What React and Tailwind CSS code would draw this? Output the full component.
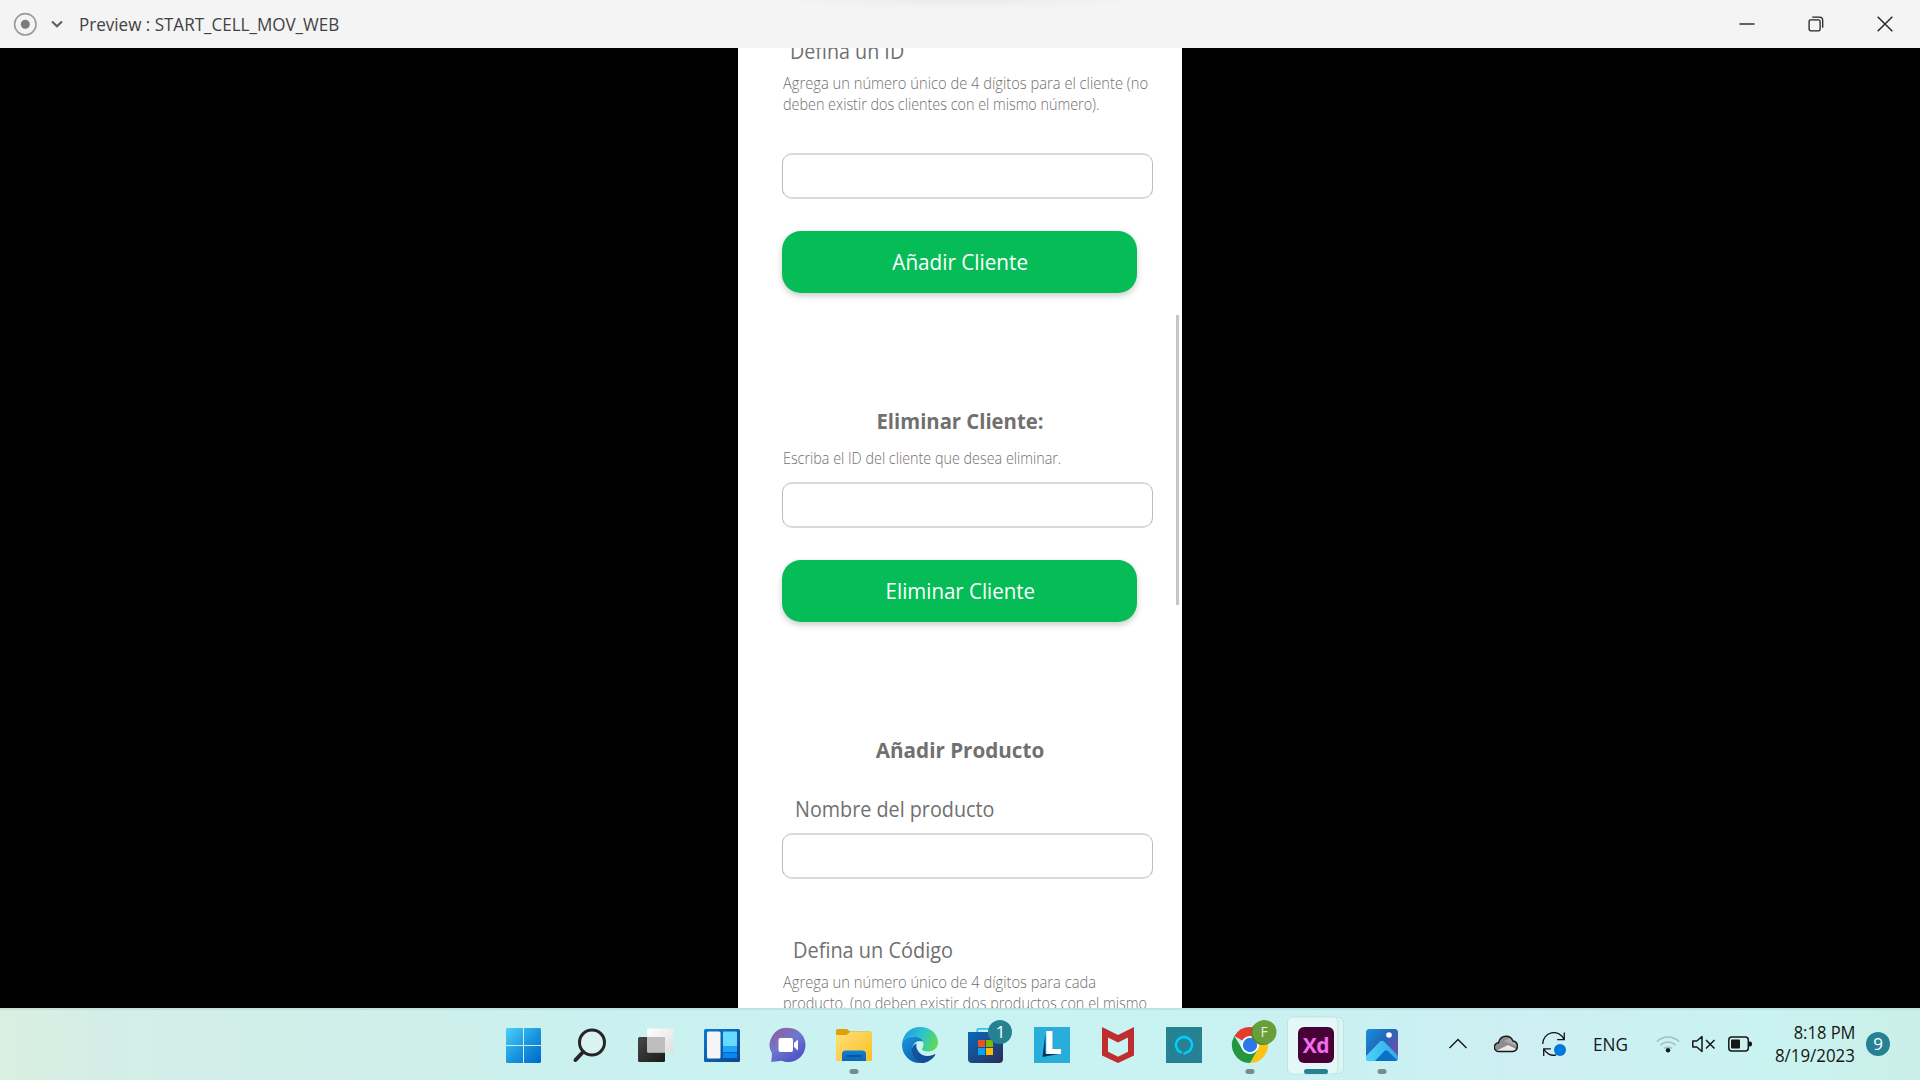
const FONT = "font-['Open_Sans','Noto_Sans',sans-serif]";

function TitleBar() {
  return (
    <header className="flex h-12 shrink-0 items-center bg-[#f4f4f4] bg-[radial-gradient(ellipse_190px_9px_at_960px_0px,#ebebeb,#f4f4f4)] text-[#424242]">
      <svg className="ml-[13px] shrink-0" width="24" height="24" viewBox="0 0 24 24">
        <circle cx="12.3" cy="12.3" r="10.7" fill="none" stroke="#9b9b9b" strokeWidth="1.6" />
        <circle cx="12.3" cy="12.3" r="4.5" fill="#7c7c7c" />
      </svg>
      <svg className="ml-[13px] shrink-0" width="14" height="10" viewBox="0 0 14 10">
        <path d="M2 2.5 7 7.3l5-4.8" fill="none" stroke="#5c5c5c" strokeWidth="2" />
      </svg>
      <h1 className="ml-[15px] origin-left scale-x-[0.946] whitespace-nowrap text-[18px] leading-6">Preview : START_CELL_MOV_WEB</h1>
      <div className="ml-auto mr-[1px] flex h-full pb-px">
        <div className="flex w-[69px] items-center justify-center">
          <svg width="16" height="16" viewBox="0 0 16 16"><path d="M.5 8h15" stroke="#222" strokeWidth="1.4" /></svg>
        </div>
        <div className="flex w-[69px] items-center justify-center">
          <svg width="16" height="16" viewBox="0 0 16 16" fill="none" stroke="#222" strokeWidth="1.3">
            <rect x="1.1" y="3.8" width="11" height="11" rx="1.6" />
            <path d="M4.2 1.2h7.2a3.3 3.3 0 0 1 3.3 3.3v7.3" />
          </svg>
        </div>
        <div className="flex w-[69px] items-center justify-center">
          <svg width="16" height="16" viewBox="0 0 16 16"><path d="m.7.700 14.600 14.600M15.300.700.7 15.300" stroke="#222" strokeWidth="1.400" /></svg>
        </div>
      </div>
    </header>
  );
}

function Field({ className }) {
  return <div className={`ml-11 h-[46px] w-[371px] shrink-0 rounded-[10px] border-x border-y-2 border-x-[#bdbdbd] border-y-[#d8d9d8] bg-white ${className}`} />;
}

function GreenButton({ children, className }) {
  return (
    <button className={`ml-11 flex h-[62px] w-[355px] shrink-0 items-center justify-center rounded-[19px] bg-[#06bc57] pb-0.5 pl-px text-[22px] leading-[30px] text-white shadow-[0_3px_6px_rgba(0,0,0,0.2)] ${className}`}>
      {children}
    </button>
  );
}

function Phone() {
  return (
    <main className="relative flex w-[444px] flex-col overflow-hidden bg-white text-[#707070]">
      <p className="-mt-[12px] ml-[52px] h-[30px] w-max shrink-0 origin-left scale-x-[0.938] whitespace-nowrap text-[21px] leading-[30px]">Defina un ID</p>
      <div className="ml-[45px] mt-[7px] shrink-0 whitespace-nowrap text-[16px] font-light leading-[21px]">
        <p className="w-max origin-left scale-x-[0.919]">Agrega un número único de 4 dígitos para el cliente (no</p>
        <p className="w-max origin-left scale-x-[0.898]">deben existir dos clientes con el mismo número).</p>
      </div>
      <Field className="mt-[38px]" />
      <GreenButton className="mt-8"><span className="scale-x-[0.94]">Añadir Cliente</span></GreenButton>
      <h2 className="mt-[113px] h-[30px] shrink-0 scale-x-[0.965] text-center text-[21px] font-bold leading-[30px]">Eliminar Cliente:</h2>
      <p className="ml-[45px] mt-[12px] h-[21px] w-max shrink-0 origin-left scale-x-[0.897] whitespace-nowrap text-[16px] font-light leading-[21px]">Escriba el ID del cliente que desea eliminar.</p>
      <Field className="mt-[13px]" />
      <GreenButton className="mt-8"><span className="scale-x-[0.93]">Eliminar Cliente</span></GreenButton>
      <h2 className="mt-[113px] h-[30px] shrink-0 scale-x-[0.982] text-center text-[21px] font-bold leading-[30px]">Añadir Producto</h2>
      <p className="ml-[57px] mt-[29px] h-[30px] w-max shrink-0 origin-left scale-x-[0.941] whitespace-nowrap text-[21px] leading-[30px]">Nombre del producto</p>
      <Field className="mt-[9px]" />
      <p className="ml-[55px] mt-[56px] h-[30px] w-max shrink-0 origin-left scale-x-[0.949] whitespace-nowrap text-[21px] leading-[30px]">Defina un Código</p>
      <div className="ml-[45px] mt-[7px] shrink-0 whitespace-nowrap text-[16px] font-light leading-[21px]">
        <p className="w-max origin-left scale-x-[0.92]">Agrega un número único de 4 dígitos para cada</p>
        <p className="w-max origin-left scale-x-[0.902]">producto. (no deben existir dos productos con el mismo</p>
      </div>
      <div className="absolute right-[3px] top-[267px] h-[290px] w-[3px] bg-[#c6c6c6]" />
    </main>
  );
}

function Slot({ children }) {
  return <svg className="shrink-0" width="66" height="72" viewBox="0 0 66 72">{children}</svg>;
}

const RunningDot = () => <rect x="28.500" y="61" width="9" height="5" rx="2.500" fill="#7b8b8b" />;

function StartIcon() {
  return (
    <Slot>
      <defs>
        <linearGradient id="win" gradientUnits="userSpaceOnUse" x1="15" y1="20" x2="50" y2="55">
          <stop offset="0" stopColor="#4cd0fd" /><stop offset=".55" stopColor="#1793dc" /><stop offset="1" stopColor="#0067cc" />
        </linearGradient>
      </defs>
      <g fill="url(#win)">
        <path d="M16.500 20H32v17H15V21.500a1.500 1.500 0 0 1 1.500-1.500Z" />
        <path d="M33 20h15.500a1.500 1.500 0 0 1 1.500 1.500V37H33Z" />
        <path d="M15 38h17v17H16.500a1.500 1.500 0 0 1-1.500-1.500Z" />
        <path d="M33 38h17v15.500a1.500 1.500 0 0 1-1.500 1.500H33Z" />
      </g>
    </Slot>
  );
}

function SearchIcon() {
  return (
    <Slot>
      <circle cx="35" cy="34.500" r="12.500" fill="#e2f3f3" fillOpacity=".6" stroke="#262626" strokeWidth="3" />
      <path d="m26 44-7.500 8" stroke="#262626" strokeWidth="4" strokeLinecap="round" />
    </Slot>
  );
}

function TaskViewIcon() {
  return (
    <Slot>
      <defs>
        <linearGradient id="tvd" x1="0" y1="0" x2="1" y2="1"><stop stopColor="#474747" /><stop offset="1" stopColor="#1b1b1b" /></linearGradient>
        <linearGradient id="tvl" x1="0" y1="0" x2="1" y2="1"><stop stopColor="#fff" /><stop offset="1" stopColor="#dedede" /></linearGradient>
      </defs>
      <rect x="15" y="29" width="27" height="25" rx="1.500" fill="url(#tvd)" />
      <rect x="24" y="20.500" width="26.500" height="24" rx="1.500" fill="url(#tvl)" />
      <path d="M24 29h18v15.500H25.500a1.500 1.500 0 0 1-1.500-1.500Z" fill="#bdbdbd" />
    </Slot>
  );
}

function WidgetsIcon() {
  return (
    <Slot>
      <defs><linearGradient id="wid" x1="0" y1="0" x2="1" y2="1"><stop stopColor="#0a7ad3" /><stop offset="1" stopColor="#11468a" /></linearGradient></defs>
      <rect x="15" y="21" width="36" height="33" rx="1.500" fill="url(#wid)" />
      <rect x="18" y="23.500" width="13.500" height="27" rx="1.500" fill="#f5f5f7" />
      <rect x="34" y="23.500" width="14" height="15" rx="1" fill="#66dbff" />
      <path d="M34 38.500h14V44H34Z" fill="#1aa7fb" />
      <path d="M34 44.800h14V50H34Z" fill="#0787f2" />
    </Slot>
  );
}

function ChatIcon() {
  return (
    <Slot>
      <defs><linearGradient id="chat" x1=".15" y1=".1" x2=".7" y2=".9"><stop stopColor="#8e5fa0" /><stop offset=".45" stopColor="#7078cf" /><stop offset="1" stopColor="#5157c6" /></linearGradient></defs>
      <path d="M33.500 20a17 17 0 1 1 0 34c-2.500 0-5-.4-7-1.300L16.300 54l.7-8.500A17 17 0 0 1 33.500 20Z" fill="url(#chat)" />
      <rect x="23.500" y="30" width="14.500" height="14" rx="2" fill="#fff" />
      <path d="m39 35 4-3.400v11L39 39Z" fill="#fff" />
    </Slot>
  );
}

function FolderIcon() {
  return (
    <Slot>
      <defs>
        <linearGradient id="fold" x1="0" y1="0" x2="1" y2="1"><stop stopColor="#ffe07a" /><stop offset="1" stopColor="#fbbd20" /></linearGradient>
        <linearGradient id="foldb" x1="0" y1="0" x2="0" y2="1"><stop stopColor="#1081d6" /><stop offset="1" stopColor="#0b64b5" /></linearGradient>
      </defs>
      <path d="M15 22.500a1.500 1.500 0 0 1 1.500-1.500H26l3 2.500h20a2 2 0 0 1 2 2V30H15Z" fill="#dfa109" />
      <path d="M15 27h10.500l3.500-3h20.500a1.500 1.500 0 0 1 1.500 1.500v26a1.500 1.500 0 0 1-1.500 1.500h-33a1.500 1.500 0 0 1-1.500-1.500Z" fill="url(#fold)" />
      <path d="M21 53v-7a3.500 3.500 0 0 1 3.500-3.500h17A3.500 3.500 0 0 1 45 46v7Z" fill="url(#foldb)" />
      <path d="M26 48h14" stroke="#0b4b8c" strokeWidth="1.500" strokeLinecap="round" />
      <RunningDot />
    </Slot>
  );
}

function EdgeIcon() {
  return (
    <Slot>
      <defs>
        <linearGradient id="eg1" x1="0" y1=".3" x2="1" y2=".6"><stop stopColor="#1b9ede" /><stop offset=".5" stopColor="#2bc3cf" /><stop offset="1" stopColor="#5fdc52" /></linearGradient>
        <linearGradient id="eg2" x1="0" y1="0" x2=".6" y2="1"><stop stopColor="#1a98e0" /><stop offset="1" stopColor="#1160b4" /></linearGradient>
        <linearGradient id="eg3" x1="0" y1="0" x2="1" y2="1"><stop stopColor="#0c59a4" /><stop offset="1" stopColor="#174a90" /></linearGradient>
      </defs>
      <path d="M15 36C16 26 23 19 33 19c11 0 18 7.500 18 15.500 0 5.500-4.500 9-9.500 9-4.500 0-6.500-1.500-6.500-2.500 0-.8 1.500-1.800 1.500-4.500 0-4-4-8-10-8C20.500 28.500 16 32 15 36Z" fill="url(#eg1)" />
      <path d="M15 37c0-5 5-8.500 11.500-8.500 5 0 8.500 2.500 9.500 5-5-2-11 1.500-11 8.500 0 6 4 11.500 9.500 13C24 56 15 47.500 15 37Z" fill="url(#eg2)" />
      <path d="M29.500 35.500c-1.500 6 4 12.500 11 12.500 3.500 0 6-1.200 7-1.800.6-.3 1 .2.700.7C45.500 51.500 40 55 34.500 55 28.500 54 24.500 48 24.800 42c.2-3.500 2-5.500 4.700-6.500Z" fill="url(#eg3)" />
    </Slot>
  );
}

function StoreIcon() {
  return (
    <Slot>
      <defs><linearGradient id="store" x1="0" y1="0" x2="1" y2="1"><stop stopColor="#0a69bd" /><stop offset="1" stopColor="#2a2e56" /></linearGradient></defs>
      <path d="M24.300 26v-4.200a1 1 0 0 1 1-1h15" fill="none" stroke="#35c0f0" strokeWidth="1.800" />
      <path d="M15 24h35v27a4 4 0 0 1-4 4H19a4 4 0 0 1-4-4Z" fill="url(#store)" />
      <path d="M25 32h7v7h-7Z" fill="#f25022" /><path d="M33 32h7v7h-7Z" fill="#7fba00" />
      <path d="M25 40h7v7h-7Z" fill="#00a4ef" /><path d="M33 40h7v7h-7Z" fill="#ffb900" />
      <circle cx="47" cy="24" r="12" fill="#268292" />
      <text x="47.500" y="29.800" textAnchor="middle" fontSize="17" fill="#fff">1</text>
    </Slot>
  );
}

function LIcon() {
  return (
    <Slot>
      <rect x="15" y="19" width="36" height="36" fill="#29aedb" />
      <path d="M26.500 25v20.500h15.500l-18.500 3.500Z" fill="#06305e" />
      <text x="24.800" y="46" fontSize="31" fontWeight="800" fill="#fff">L</text>
    </Slot>
  );
}

function ShieldIcon() {
  return (
    <Slot>
      <path fillRule="evenodd" d="m17 19 16 8 16-8v28.500L33 55l-16-7.500Zm6 10.500v14.200l10 5 10-5V29.500l-10 5Z" fill="#c02d2f" />
    </Slot>
  );
}

function RingIcon() {
  return (
    <Slot>
      <rect x="15" y="19" width="36" height="36" fill="#268292" />
      <path d="M30.800 44.700a8 8 0 1 1 4.400 0l-2.700 1.300" fill="none" stroke="#00ceff" strokeWidth="2.400" />
    </Slot>
  );
}

function ChromeIcon() {
  return (
    <Slot>
      <path d="M33 37 17.400 28A18 18 0 0 1 48.600 28Z" fill="#e33b2e" />
      <path d="M33 28h15.600A18 18 0 0 1 33 55l8-13.500Z" fill="#fcc314" />
      <path d="M17.400 28 25.500 41.500 33 46l7.800-4.500L33 55A18 18 0 0 1 17.400 28Z" fill="#24963f" />
      <circle cx="33" cy="37" r="9" fill="#fff" />
      <circle cx="33" cy="37" r="7.200" fill="#2a78ec" />
      <circle cx="46" cy="25" r="12" fill="#4f852c" />
      <circle cx="47.500" cy="24" r="12" fill="#689f38" />
      <text x="47.200" y="29" textAnchor="middle" fontSize="14" fill="#e6f0dc">F</text>
      <RunningDot />
    </Slot>
  );
}

function XdIcon() {
  return (
    <Slot>
      <rect x="9" y="9.500" width="51.500" height="56" rx="5" fill="#daf6f6" stroke="#bfe3e3" />
      <rect x="4.500" y="9" width="50.500" height="57" rx="5" fill="#e5f8f8" stroke="#c3e2e2" />
      <rect x="15" y="19" width="36" height="36" rx="6" fill="#470137" />
      <text x="33" y="44.500" textAnchor="middle" fontSize="21" fontWeight="700" letterSpacing="-.5" fill="#f36cee">Xd</text>
      <rect x="21" y="61" width="24" height="5" rx="2.500" fill="#268292" />
    </Slot>
  );
}

function PhotosIcon() {
  return (
    <Slot>
      <defs>
        <linearGradient id="ph1" x1="0" y1="0" x2="1" y2=".8"><stop stopColor="#1590df" /><stop offset=".5" stopColor="#2467b8" /><stop offset="1" stopColor="#7b4ba5" /></linearGradient>
        <linearGradient id="ph2" x1="0" y1="0" x2="1" y2="0"><stop stopColor="#4fd5fa" /><stop offset="1" stopColor="#2aa5e4" /></linearGradient>
        <clipPath id="phc"><rect x="17" y="21" width="32" height="32" rx="3.500" /></clipPath>
      </defs>
      <g clipPath="url(#phc)">
        <rect x="17" y="21" width="32" height="32" fill="url(#ph1)" />
        <path d="M14 51 30.500 34a3.500 3.500 0 0 1 5 0L54 53v4H14Z" fill="url(#ph2)" />
        <path d="m23 56 12-12.500a3 3 0 0 1 4.400 0L52 56Z" fill="#0c6fc9" />
        <circle cx="40" cy="27" r="2.800" fill="#fff" />
      </g>
      <RunningDot />
    </Slot>
  );
}

function Tray() {
  return (
    <div className="ml-[34px] flex h-full items-center text-[#161616]">
      <svg className="shrink-0" width="18" height="12" viewBox="0 0 18 12"><path d="m.5 10 8.500-8.500L17.500 10" fill="none" stroke="currentColor" strokeWidth="1.400" /></svg>
      <svg className="ml-[27px] shrink-0" width="24" height="18" viewBox="0 0 24 18">
        <defs><clipPath id="cloud"><path d="M5 16.500a4.300 4.300 0 0 1-.6-8.700C5.500 3.800 8.500 1.300 12 1.300c3.200 0 5.800 1.700 7 4.700a5.300 5.300 0 0 1-.3 10.500Z" /></clipPath></defs>
        <g clipPath="url(#cloud)">
          <path d="M0 0h24v18H0Z" fill="#8d8d8d" />
          <path d="m10 6 14 6V4l-6-2Z" fill="#a9a9a9" />
          <path d="m2 16 12-6 10 5v3H2Z" fill="#e9e9e9" />
        </g>
        <path d="M5 16.500a4.300 4.300 0 0 1-.6-8.700C5.500 3.800 8.500 1.300 12 1.300c3.200 0 5.800 1.700 7 4.700a5.300 5.300 0 0 1-.3 10.500Z" fill="none" stroke="currentColor" strokeWidth="1.400" />
      </svg>
      <svg className="ml-6 shrink-0" width="24" height="24" viewBox="0 0 24 24" fill="none" stroke="currentColor" strokeWidth="1.300">
        <path d="M.8 12A11 11 0 0 1 22 7.500M22.300.5v7.200h-7.200M1.700 24v-7.200h7.200M1.700 16.800A11 11 0 0 0 14 23" />
        <circle cx="18" cy="18" r="6" fill="#0078d9" stroke="none" />
      </svg>
      <span className="ml-[27px] w-[37px] origin-left scale-x-[0.98] whitespace-nowrap text-[17.500px] leading-6">ENG</span>
      <svg className="ml-[26px] shrink-0" width="24" height="18" viewBox="0 0 24 18" fill="none" stroke="#a3bfc0" strokeWidth="1.500">
        <path d="M.8 6.800a15.500 15.500 0 0 1 22.400 0M4.300 10.300a10.700 10.700 0 0 1 15.400 0M7.800 13.600a6 6 0 0 1 8.400 0" />
        <circle cx="12" cy="15.300" r="2.200" fill="#161616" stroke="none" />
      </svg>
      <svg className="ml-3 shrink-0" width="24" height="18" viewBox="0 0 24 18" fill="none" stroke="currentColor" strokeWidth="1.500">
        <path d="M.8 6h4L10 1.500v15L4.800 12h-4Z" strokeLinejoin="round" /><path d="m14 5 8.500 8.500M22.500 5 14 13.500" />
      </svg>
      <svg className="ml-3 shrink-0" width="24" height="18" viewBox="0 0 24 18">
        <rect x=".8" y="2" width="19.500" height="14" rx="3" fill="none" stroke="currentColor" strokeWidth="1.500" />
        <rect x="3" y="4.500" width="9" height="9" rx="1" fill="currentColor" /><path d="M21 6.500h1a2 2 0 0 1 2 2v1a2 2 0 0 1-2 2h-1Z" fill="currentColor" />
      </svg>
      <div className="ml-[13px] flex w-[90px] flex-col items-end whitespace-nowrap text-[17.500px] leading-[23px]">
        <span className="origin-right scale-x-[0.944]">8:18 PM</span>
        <span className="origin-right scale-x-[0.965]">8/19/2023</span>
      </div>
      <span className="ml-[11px] flex size-6 items-center justify-center rounded-full bg-[#268292] text-[17px] leading-6 text-white">9</span>
    </div>
  );
}

function Taskbar() {
  return (
    <footer className="flex h-[72px] shrink-0 items-center bg-[linear-gradient(90deg,#daefe1_0%,#d4eee7_5%,#d1eeea_18%,#caf1ef_30%,#c9f3f2_50%,#c9f1f2_68%,#ceeff3_80%,#c9f3f1_92%,#cbefe8_100%)] pl-[491px] shadow-[inset_0_2px_0_rgba(100,150,150,0.14)]">
      <StartIcon /><SearchIcon /><TaskViewIcon /><WidgetsIcon /><ChatIcon /><FolderIcon /><EdgeIcon />
      <StoreIcon /><LIcon /><ShieldIcon /><RingIcon /><ChromeIcon /><XdIcon /><PhotosIcon />
      <Tray />
    </footer>
  );
}

export default function App() {
  return (
    <div className={`flex h-[1080px] w-[1920px] flex-col overflow-hidden ${FONT}`}>
      <TitleBar />
      <div className="flex min-h-0 flex-1 justify-center bg-black"><Phone /></div>
      <Taskbar />
    </div>
  );
}
